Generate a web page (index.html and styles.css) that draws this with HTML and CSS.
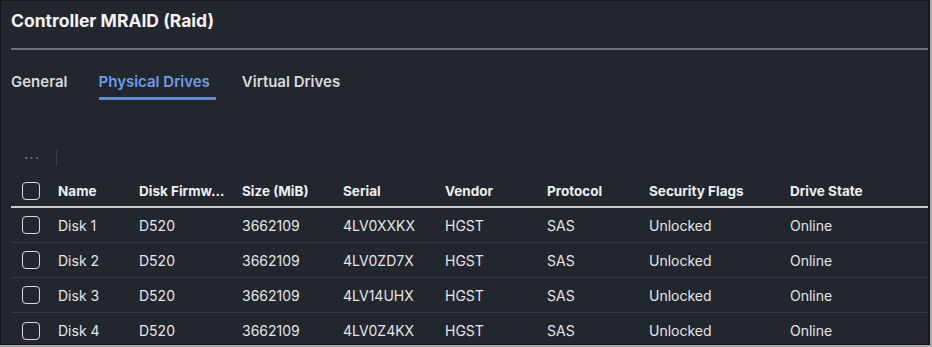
FILE: index.html
```html
<!DOCTYPE html>
<html>
<head>
<meta charset="utf-8">
<link rel="stylesheet" href="styles.css">
</head>
<body>
<div class="frame">
  <div class="panel">
    <h1 class="title">Controller MRAID (Raid)</h1>
    <div class="sep"></div>
    <nav class="tabs">
      <span class="tab">General</span>
      <span class="tab active">Physical Drives</span>
      <span class="tab">Virtual Drives</span>
    </nav>
    <div class="toolbar">
      <span class="dots">···</span>
      <span class="vdiv"></span>
    </div>
    <div class="table">
      <div class="row head">
        <span class="cb"></span>
        <span class="c name">Name</span>
        <span class="c fw">Disk Firmw...</span>
        <span class="c">Size (MiB)</span>
        <span class="c">Serial</span>
        <span class="c">Vendor</span>
        <span class="c">Protocol</span>
        <span class="c sec">Security Flags</span>
        <span class="c">Drive State</span>
      </div>
      <div class="row">
        <span class="cb"></span>
        <span class="c name">Disk 1</span>
        <span class="c fw">D520</span>
        <span class="c">3662109</span>
        <span class="c">4LV0XXKX</span>
        <span class="c">HGST</span>
        <span class="c">SAS</span>
        <span class="c sec">Unlocked</span>
        <span class="c">Online</span>
      </div>
      <div class="row">
        <span class="cb"></span>
        <span class="c name">Disk 2</span>
        <span class="c fw">D520</span>
        <span class="c">3662109</span>
        <span class="c">4LV0ZD7X</span>
        <span class="c">HGST</span>
        <span class="c">SAS</span>
        <span class="c sec">Unlocked</span>
        <span class="c">Online</span>
      </div>
      <div class="row">
        <span class="cb"></span>
        <span class="c name">Disk 3</span>
        <span class="c fw">D520</span>
        <span class="c">3662109</span>
        <span class="c">4LV14UHX</span>
        <span class="c">HGST</span>
        <span class="c">SAS</span>
        <span class="c sec">Unlocked</span>
        <span class="c">Online</span>
      </div>
      <div class="row last">
        <span class="cb"></span>
        <span class="c name">Disk 4</span>
        <span class="c fw">D520</span>
        <span class="c">3662109</span>
        <span class="c">4LV0Z4KX</span>
        <span class="c">HGST</span>
        <span class="c">SAS</span>
        <span class="c sec">Unlocked</span>
        <span class="c">Online</span>
      </div>
    </div>
  </div>
</div>
</body>
</html>
```

FILE: styles.css
```css
* { box-sizing: border-box; }
html, body { margin: 0; padding: 0; }
body {
  background: #a9abae;
  width: 932px;
  height: 347px;
  overflow: hidden;
  font-family: Inter, "Noto Sans", "Liberation Sans", sans-serif;
  color: #e6e7e9;
}
.frame {
  width: 930px;
  height: 345px;
  background: #16171a;
  padding: 1px 2px 1px 1px;
}
.panel {
  height: 100%;
  background: #22262d;
  padding: 0 0 0 10px;
  overflow: hidden;
}
.title {
  margin: 0;
  font-size: 17.5px;
  font-weight: 700;
  line-height: 20px;
  padding-top: 10px;
  height: 47px;
  color: #f2f3f5;
}
.sep {
  height: 2px;
  background: #6f737a;
}
.tabs {
  display: flex;
  padding-top: 22px;
  height: 64px;
}
.tab {
  font-size: 15px;
  font-weight: 600;
  line-height: 20px;
  color: #d8d9dc;
  margin-right: 31px;
  height: 28px;
}
.tab.active {
  color: #6b9de8;
  border-bottom: 3px solid #5b8dd9;
  padding-right: 6px;
  margin-right: 26px;
}
.toolbar {
  display: flex;
  align-items: center;
  height: 61px;
  padding-left: 13px;
  padding-top: 27px;
}
.dots {
  color: #73777e;
  font-size: 15px;
  letter-spacing: 1px;
  line-height: 16px;
}
.vdiv {
  width: 1px;
  height: 16px;
  background: #3a3e45;
  margin-left: 16px;
}
.table {
  width: 918px;
}
.row {
  display: grid;
  grid-template-columns: 47px 81px 103px 101px 102px 102px 102px 141px 1fr;
  align-items: center;
  height: 35px;
  border-bottom: 1px solid #363a41;
  font-size: 14px;
  color: #e4e5e8;
}
.row.head {
  height: 33px;
  border-bottom: 2px solid #c9cbcf;
  font-weight: 700;
  color: #eceef0;
  font-size: 13.5px;
}
.row.last { border-bottom: none; }
.cb {
  width: 18px;
  height: 18px;
  border: 1.5px solid #d7d9dc;
  border-radius: 4px;
  margin-left: 11px;
}
.c { white-space: nowrap; }
```
